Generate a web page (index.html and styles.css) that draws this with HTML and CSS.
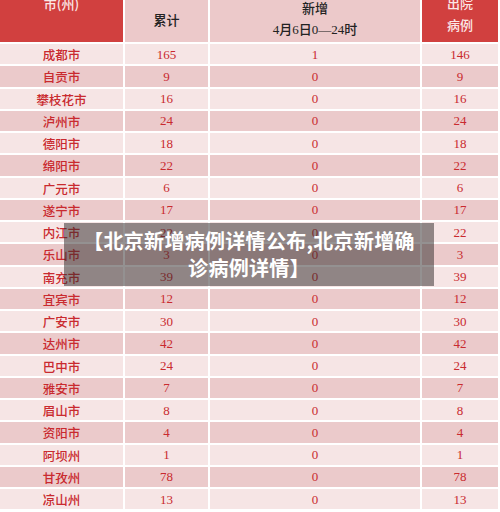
FILE: index.html
```html
<!DOCTYPE html>
<html lang="zh">
<head>
<meta charset="utf-8">
<link rel="stylesheet" href="styles.css">
</head>
<body>
<div class="page">
  <div class="table">
    <div class="hd red c1"><span>市(州)</span></div>
    <div class="hd pink c2"><span>累计</span></div>
    <div class="hd pink c3"><span class="l1">新增</span><span class="l2">4月6日0—24时</span></div>
    <div class="hd red c4"><span class="l1">出院</span><span class="l2">病例</span></div>

    <div class="r a">成都市</div><div class="r a n">165</div><div class="r a n">1</div><div class="r a n">146</div>
    <div class="r b">自贡市</div><div class="r b n">9</div><div class="r b n">0</div><div class="r b n">9</div>
    <div class="r a">攀枝花市</div><div class="r a n">16</div><div class="r a n">0</div><div class="r a n">16</div>
    <div class="r b">泸州市</div><div class="r b n">24</div><div class="r b n">0</div><div class="r b n">24</div>
    <div class="r a">德阳市</div><div class="r a n">18</div><div class="r a n">0</div><div class="r a n">18</div>
    <div class="r b">绵阳市</div><div class="r b n">22</div><div class="r b n">0</div><div class="r b n">22</div>
    <div class="r a">广元市</div><div class="r a n">6</div><div class="r a n">0</div><div class="r a n">6</div>
    <div class="r b">遂宁市</div><div class="r b n">17</div><div class="r b n">0</div><div class="r b n">17</div>
    <div class="r a">内江市</div><div class="r a n">22</div><div class="r a n">0</div><div class="r a n">22</div>
    <div class="r b">乐山市</div><div class="r b n">3</div><div class="r b n">0</div><div class="r b n">3</div>
    <div class="r a">南充市</div><div class="r a n">39</div><div class="r a n">0</div><div class="r a n">39</div>
    <div class="r b">宜宾市</div><div class="r b n">12</div><div class="r b n">0</div><div class="r b n">12</div>
    <div class="r a">广安市</div><div class="r a n">30</div><div class="r a n">0</div><div class="r a n">30</div>
    <div class="r b">达州市</div><div class="r b n">42</div><div class="r b n">0</div><div class="r b n">42</div>
    <div class="r a">巴中市</div><div class="r a n">24</div><div class="r a n">0</div><div class="r a n">24</div>
    <div class="r b">雅安市</div><div class="r b n">7</div><div class="r b n">0</div><div class="r b n">7</div>
    <div class="r a">眉山市</div><div class="r a n">8</div><div class="r a n">0</div><div class="r a n">8</div>
    <div class="r b">资阳市</div><div class="r b n">4</div><div class="r b n">0</div><div class="r b n">4</div>
    <div class="r a">阿坝州</div><div class="r a n">1</div><div class="r a n">0</div><div class="r a n">1</div>
    <div class="r b">甘孜州</div><div class="r b n">78</div><div class="r b n">0</div><div class="r b n">78</div>
    <div class="r a">凉山州</div><div class="r a n">13</div><div class="r a n">0</div><div class="r a n">13</div>
  </div>
  <div class="banner">【北京新增病例详情公布,北京新增确<br>诊病例详情】</div>
</div>
</body>
</html>
```
FILE: styles.css
```css
html, body {
  margin: 0;
  padding: 0;
  background: #ffffff;
  overflow: hidden;
}
.page {
  position: relative;
  width: 500px;
  height: 512px;
  overflow: hidden;
}
.table {
  display: grid;
  grid-template-columns: 123px 83px 210px 76px;
  grid-template-rows: 42px repeat(21, 20.25px);
  column-gap: 2px;
  row-gap: 2px;
  width: 498px;
  font-family: "Liberation Serif", "Noto Sans CJK SC", serif;
}
.hd {
  display: flex;
  flex-direction: column;
  align-items: center;
  font-size: 13px;
  line-height: 16px;
  color: #222222;
  font-family: "Noto Sans CJK SC", sans-serif;
  font-weight: 500;
}
.red { background: #d1403f; color: #fbe7e6; }
.pink { background: #ecc9ca; }
.c1 span { margin-top: -4px; }
.c2 { justify-content: center; }
.c2 span { margin-top: -3px; }
.c3 .l1 { margin-top: 0px; }
.c3 .l2 { margin-top: 6px; font-family: "Liberation Serif", "Noto Sans CJK SC", serif; font-size: 13px; }
.c4 .l1 { margin-top: -5px; }
.c4 .l2 { margin-top: 6px; }
.r {
  display: flex;
  align-items: center;
  justify-content: center;
  color: #c92a2f;
  font-size: 12.5px;
  font-family: "Noto Sans CJK SC", sans-serif;
  font-weight: 500;
  padding-top: 1px;
}
.r.n {
  font-family: "Liberation Serif", serif;
  font-size: 13px;
  font-weight: 400;
}
.a { background: #f6e5e5; }
.b { background: #ebcacb; }
.banner {
  position: absolute;
  left: 64px;
  top: 223px;
  width: 370px;
  height: 63px;
  background: rgba(50, 44, 44, 0.52);
  color: #ffffff;
  font-family: "Noto Sans CJK SC", sans-serif;
  font-weight: 700;
  font-size: 20px;
  line-height: 27px;
  text-align: center;
  padding-top: 4px;
  box-sizing: border-box;
  letter-spacing: 0.3px;
}
```
